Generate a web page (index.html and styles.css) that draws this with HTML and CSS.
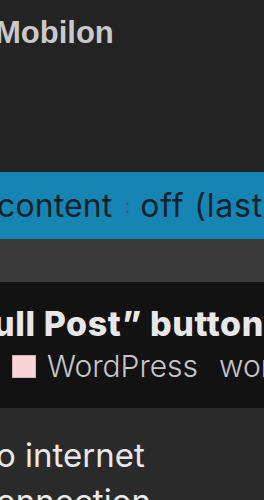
FILE: index.html
```html
<!DOCTYPE html>
<html>
<head>
<meta charset="utf-8">
<link rel="stylesheet" href="styles.css">
</head>
<body>
<div class="page">
  <section class="header">
    <h1 class="brand">Mobilon</h1>
  </section>
  <section class="banner">
    <p class="status">content <span class="colon">:</span> <span class="value">off (last</span></p>
  </section>
  <section class="spacer"></section>
  <section class="post">
    <h2 class="post-title">ull Post” button</h2>
    <div class="tags">
      <span class="swatch"></span>
      <span class="tag">WordPress</span>
      <span class="tag">wor</span>
    </div>
  </section>
  <section class="notice">
    <p class="notice-text">o internet<br>onnection</p>
  </section>
</div>
</body>
</html>
```
FILE: styles.css
```css
html, body {
  margin: 0;
  padding: 0;
  background: #2a2a2a;
}
body {
  width: 264px;
  height: 500px;
  overflow: hidden;
}
.page {
  display: flex;
  flex-direction: column;
  width: 264px;
  white-space: nowrap;
  overflow: hidden;
}
.header {
  height: 172px;
  background: #232323;
  padding-top: 14px;
  box-sizing: border-box;
}
.brand {
  margin: 0 0 0 -5px;
  font-family: "Liberation Sans", Arial, sans-serif;
  font-weight: 700;
  font-size: 31px;
  line-height: 38px;
  color: #c9c9c9;
}
.banner {
  height: 67px;
  background: #1785b4;
  display: flex;
  align-items: center;
}
.status {
  margin: 0 0 0 -3px;
  font-family: Inter, "Noto Sans", sans-serif;
  font-size: 32px;
  letter-spacing: 0.1px;
  color: #13222b;
}
.colon {
  display: inline-block;
  margin: 0 1px 0 3px;
  font-size: 20px;
  color: #2d5f79;
  vertical-align: 4px;
}
.value {
  letter-spacing: 0.8px;
}
.spacer {
  height: 43px;
  background: #3a3a3a;
}
.post {
  height: 126px;
  background: #121212;
  box-sizing: border-box;
  padding-top: 21px;
}
.post-title {
  margin: 0 0 0 -7px;
  font-family: Inter, "Noto Sans", sans-serif;
  font-weight: 800;
  font-size: 34px;
  letter-spacing: 0.6px;
  line-height: 42px;
  color: #e8e8e8;
}
.tags {
  display: flex;
  align-items: center;
  gap: 11px;
  margin-top: 4px;
  padding-left: 12px;
}
.swatch {
  width: 24px;
  height: 23px;
  background: #f9d3d6;
  box-sizing: border-box;
  border: 1px solid #d9b4b7;
  flex: none;
}
.tag {
  font-family: Inter, "Noto Sans", sans-serif;
  font-weight: 300;
  font-size: 30px;
  line-height: 34px;
  color: #c6c6c6;
  margin-right: 10px;
}
.notice {
  flex: 1;
  background: #2a2a2a;
  padding-top: 24px;
}
.notice-text {
  margin: 0 0 0 -4px;
  font-family: Inter, "Noto Sans", sans-serif;
  font-size: 33px;
  line-height: 46px;
  color: #e9e9e9;
}
```
